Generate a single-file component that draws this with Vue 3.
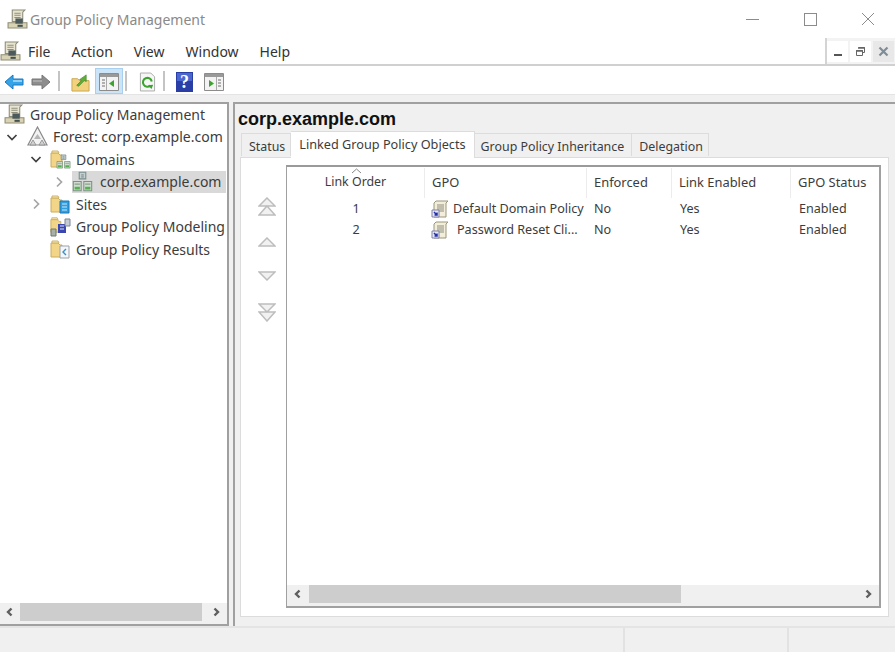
<script setup>
const menus = ['File', 'Action', 'View', 'Window', 'Help']
const tabs = ['Status', 'Linked Group Policy Objects', 'Group Policy Inheritance', 'Delegation']

const tree = [
  { label: 'Group Policy Management', icon: 'console', level: 0, arrow: '' },
  { label: 'Forest: corp.example.com', icon: 'forest', level: 1, arrow: 'open' },
  { label: 'Domains', icon: 'domains', level: 2, arrow: 'open' },
  { label: 'corp.example.com', icon: 'domain', level: 3, arrow: 'closed', selected: true },
  { label: 'Sites', icon: 'sites', level: 2, arrow: 'closed' },
  { label: 'Group Policy Modeling', icon: 'modeling', level: 2, arrow: '' },
  { label: 'Group Policy Results', icon: 'results', level: 2, arrow: '' }
]

const rows = [
  { order: 1, gpo: 'Default Domain Policy', indent: false },
  { order: 2, gpo: 'Password Reset Cli...', indent: true }
]
</script>

<template>
  <div class="window">
    <svg class="defs" width="0" height="0">
      <defs>
        <symbol id="console" viewBox="0 0 20 20">
          <path d="M5 1h12l-2 2v9H5z" fill="#e9e4cf" stroke="#8b8a78" stroke-width="1" />
          <path d="M7 4h6M7 6h6M7 8h6" stroke="#8f8f80" stroke-width="1" />
          <path d="M1 13h18v5H1z" fill="#d9d3b5" stroke="#8f8c70" stroke-width="1" />
          <path d="M8 9h7v5H8z" fill="#4d5a5c" />
          <path d="M10 15h5v2h-5z" fill="#44504f" />
        </symbol>
        <symbol id="folder" viewBox="0 0 20 20">
          <path d="M1 4h7l2 2h2v12H1z" fill="#f3d588" stroke="#c9ac5c" stroke-width="1" />
          <path d="M2 2h6l1 2H2z" fill="#f8e6ad" stroke="#cdb36c" stroke-width="1" />
        </symbol>
        <symbol id="servers" viewBox="0 0 16 16">
          <path d="M5.500 1h5v5h-5z" fill="#c5d0d0" stroke="#7a8c8c" stroke-width=".8" />
          <path d="M1 8h6v7H1z" fill="#cfdccf" stroke="#7a947f" stroke-width=".8" />
          <path d="M9 8h6v7H9z" fill="#cfdccf" stroke="#7a947f" stroke-width=".8" />
          <path d="M7 3h2M7 4.500h2" stroke="#6e8080" stroke-width=".7" />
          <path d="M2 10h4M10 10h4" stroke="#8aa08f" stroke-width=".8" />
          <path d="M2 13h4M10 13h4" stroke="#55b04f" stroke-width="2" />
        </symbol>
        <symbol id="gpo" viewBox="0 0 18 18">
          <path d="M5 1h12l-2 2v14H3V3z" fill="#f3eed9" stroke="#9a957c" stroke-width="1" />
          <path d="M6 5h7M6 7h7M6 9h7M6 11h7" stroke="#8d8d80" stroke-width="1" />
          <path d="M1 10h7v7H1z" fill="#e8e8f4" stroke="#7f80a8" stroke-width="1" />
          <path d="M3 12l3 3M6 12.500V15H3.500" fill="none" stroke="#2430a8" stroke-width="1.500" />
        </symbol>
        <symbol id="chev-left" viewBox="0 0 10 10">
          <path d="M6.500 1.500L3 5l3.500 3.500" fill="none" stroke="#5f5f5f" stroke-width="2.400" />
        </symbol>
        <symbol id="chev-right" viewBox="0 0 10 10">
          <path d="M3.500 1.500L7 5 3.500 8.500" fill="none" stroke="#5f5f5f" stroke-width="2.400" />
        </symbol>
      </defs>
    </svg>

    <header class="titlebar">
      <svg class="title-icon" width="21" height="21"><use href="#console" /></svg>
      <span class="title-text">Group Policy Management</span>
      <div class="caption">
        <span class="caption-btn"><i class="cap-min"></i></span>
        <span class="caption-btn"><i class="cap-max"></i></span>
        <span class="caption-btn">
          <svg width="14" height="14" viewBox="0 0 14 14"><path d="M1 1l12 12M13 1L1 13" stroke="#8c8c8c" stroke-width="1" /></svg>
        </span>
      </div>
    </header>

    <nav class="menubar">
      <svg class="menu-icon" width="21" height="21"><use href="#console" /></svg>
      <span v-for="m in menus" :key="m" class="menu-item">{{ m }}</span>
      <div class="mdi">
        <span class="mdi-btn"><i class="mdi-min"></i></span>
        <span class="mdi-btn">
          <svg width="11" height="11" viewBox="0 0 11 11"><path d="M3.500 1.500h6v5h-2M1.500 4.500h6v5h-6z" fill="none" stroke="#666" stroke-width="1" /><path d="M3 2h7M1 5h7" stroke="#666" stroke-width="1.500" /></svg>
        </span>
        <span class="mdi-btn mdi-close">
          <svg width="11" height="11" viewBox="0 0 11 11"><path d="M1.500 1.500l8 8M9.500 1.500l-8 8" stroke="#7f8c96" stroke-width="2.200" /></svg>
        </span>
      </div>
    </nav>

    <div class="toolbar">
      <button class="tool tool-back">
        <svg width="20" height="16" viewBox="0 0 20 16"><path d="M1 8l8-7v4h10v6H9v4z" fill="#35a3e6" stroke="#1b78c0" stroke-width="1" /><path d="M9 6h9v2H9z" fill="#8fd0f5" /></svg>
      </button>
      <button class="tool tool-forward">
        <svg width="20" height="16" viewBox="0 0 20 16"><path d="M19 8l-8-7v4H1v6h10v4z" fill="#8d8d8d" stroke="#777" stroke-width="1" /><path d="M2 6h9v2H2z" fill="#a8a8a8" /></svg>
      </button>
      <span class="tool-sep sep-a"></span>
      <button class="tool tool-up">
        <svg width="19" height="19" viewBox="0 0 20 20"><path d="M1 6h6l2 2h10v11H1z" fill="#f2d27c" stroke="#c8a654" stroke-width="1" /><path d="M6 13l5-5-2-1 7-5v7l-2-1-6 6z" fill="#5fae3a" stroke="#3f8a25" stroke-width=".7" /></svg>
      </button>
      <button class="tool tool-active">
        <svg width="20" height="18" viewBox="0 0 20 18"><path d="M.5 .5h19v17H.500z" fill="#f3f3f3" stroke="#8c8c8c" stroke-width="1" /><path d="M1 1h18v3H1z" fill="#999" /><path d="M7.500 4v13" stroke="#aaa" stroke-width="1" /><path d="M3 7h3M3 10h3M3 13h3" stroke="#9a9a9a" stroke-width="1.500" /><path d="M15 7v7l-5-3.500z" fill="#3ba32e" /></svg>
      </button>
      <span class="tool-sep sep-b"></span>
      <button class="tool tool-refresh">
        <svg width="17" height="20" viewBox="0 0 18 20"><path d="M1.500 .5h11l4 4v15h-15z" fill="#f6f6f6" stroke="#a9a9a9" stroke-width="1" /><path d="M13.500 9.500a4.700 4.700 0 1 0-1.300 4.200" fill="none" stroke="#3ba32e" stroke-width="2.200" /><path d="M15 13l-5.500 .5 3.800 3.800z" fill="#3ba32e" /></svg>
      </button>
      <span class="tool-sep sep-c"></span>
      <button class="tool tool-help">
        <svg width="17" height="20" viewBox="0 0 17 20"><path d="M0 0h17v20H0z" fill="#2a3fa6" /><path d="M1 1h15v8H1z" fill="#4a66cf" /><text x="8.500" y="16" text-anchor="middle" class="help-q">?</text></svg>
      </button>
      <button class="tool tool-panel">
        <svg width="20" height="18" viewBox="0 0 20 18"><path d="M.5 .5h19v17H.500z" fill="#f3f3f3" stroke="#8c8c8c" stroke-width="1" /><path d="M1 1h18v3H1z" fill="#999" /><path d="M12.500 4v13" stroke="#aaa" stroke-width="1" /><path d="M14 7h3M14 10h3M14 13h3" stroke="#9a9a9a" stroke-width="1.500" /><path d="M5 7v7l5-3.500z" fill="#3ba32e" /></svg>
      </button>
    </div>

    <main class="panes">
      <aside class="tree-pane">
        <ul class="tree">
          <li v-for="item in tree" :key="item.label" class="tree-row" :class="'lvl' + item.level">
            <span class="twisty">
              <svg v-if="item.arrow === 'open'" width="12" height="12" viewBox="0 0 12 12"><path d="M1.500 4L6 8.500 10.500 4" fill="none" stroke="#404040" stroke-width="1.700" /></svg>
              <svg v-else-if="item.arrow === 'closed'" width="12" height="12" viewBox="0 0 12 12"><path d="M4 1.500L8.500 6 4 10.500" fill="none" stroke="#a6a6a6" stroke-width="1.700" /></svg>
            </span>
            <span class="node" :class="{ selected: item.selected }">
              <svg class="node-icon" width="21" height="21" viewBox="0 0 21 21">
                <use v-if="item.icon === 'console'" href="#console" />
                <g v-else-if="item.icon === 'forest'">
                  <path d="M10.500 1L20 19H1z" fill="#f2f2f2" stroke="#8a8a8a" stroke-width="1.200" />
                  <path d="M10.500 8L14 13H7z" fill="#b5b5b5" />
                  <path d="M6 14l-3 5h6zM15 14l-3 5h6z" fill="#d0d0d0" stroke="#8a8a8a" stroke-width=".8" />
                </g>
                <g v-else-if="item.icon === 'domain'">
                  <use href="#servers" x="0" y="0" width="21" height="21" />
                </g>
                <g v-else-if="item.icon === 'domains'">
                  <use href="#folder" width="20" height="20" />
                  <use href="#servers" x="6" y="5" width="15" height="15" />
                </g>
                <g v-else-if="item.icon === 'sites'">
                  <use href="#folder" width="20" height="20" />
                  <path d="M10 7h9v12h-9z" fill="#2f9fe0" stroke="#1b77b8" stroke-width="1" />
                  <path d="M12 10h5M12 13h5M12 16h5" stroke="#c9e8fa" stroke-width="1.200" />
                </g>
                <g v-else-if="item.icon === 'modeling'">
                  <use href="#folder" width="18" height="18" />
                  <path d="M1 13h5v7H1z" fill="#a8b0a8" stroke="#6f7a70" stroke-width="1" />
                  <path d="M8 8h8v9H8z" fill="#3a47b0" />
                  <path d="M15 3h5v7h-5z" fill="#c5ccd4" stroke="#7a8590" stroke-width="1" />
                  <path d="M10 10h4M10 13h4" stroke="#dfe3f5" stroke-width="1.200" />
                </g>
                <g v-else>
                  <use href="#folder" width="20" height="20" />
                  <path d="M10 7h9v12h-9z" fill="#f5f6f8" stroke="#9aa3ad" stroke-width="1" />
                  <path d="M16 10l-3 3 3 3" fill="none" stroke="#3a8fc8" stroke-width="1.400" />
                </g>
              </svg>
              <span class="node-label">{{ item.label }}</span>
            </span>
          </li>
        </ul>
        <div class="hscroll tree-scroll">
          <span class="sb-btn"><svg width="10" height="10"><use href="#chev-left" /></svg></span>
          <span class="sb-track"><i class="sb-thumb full"></i></span>
          <span class="sb-btn"><svg width="10" height="10"><use href="#chev-right" /></svg></span>
        </div>
      </aside>

      <section class="detail-pane">
        <h1 class="heading">corp.example.com</h1>
        <div class="tabs">
          <span v-for="(t, i) in tabs" :key="t" class="tab" :class="{ active: i === 1 }">{{ t }}</span>
        </div>
        <div class="tab-body">
          <div class="order-btns">
            <svg width="18" height="20" viewBox="0 0 18 20"><path d="M9 1l8 8H1zM9 9l8 9H1z" fill="#f1f1f1" stroke="#bdbdbd" stroke-width="1.500" /></svg>
            <svg width="18" height="10" viewBox="0 0 18 10"><path d="M9 1l8 8H1z" fill="#f1f1f1" stroke="#bdbdbd" stroke-width="1.500" /></svg>
            <svg width="18" height="10" viewBox="0 0 18 10"><path d="M9 9l8-8H1z" fill="#f1f1f1" stroke="#bdbdbd" stroke-width="1.500" /></svg>
            <svg width="18" height="20" viewBox="0 0 18 20"><path d="M9 10L1 2h16zM9 19l-8-9h16z" fill="#f1f1f1" stroke="#bdbdbd" stroke-width="1.500" /></svg>
          </div>
          <div class="listview">
            <div class="list-main">
              <div class="list-head">
                <span class="col c-order">
                  <svg class="sort-caret" width="11" height="6" viewBox="0 0 11 6"><path d="M1 5l4.500-4L10 5" fill="none" stroke="#888" stroke-width="1" /></svg>
                  Link Order
                </span>
                <span class="col c-gpo">GPO</span>
                <span class="col c-enf">Enforced</span>
                <span class="col c-link">Link Enabled</span>
                <span class="col c-status">GPO Status</span>
              </div>
              <div v-for="r in rows" :key="r.order" class="list-row">
                <span class="cell c-order">{{ r.order }}</span>
                <span class="cell c-gpo">
                  <svg class="gpo-icon" width="18" height="18"><use href="#gpo" /></svg>
                  <span :class="{ 'gpo-indent': r.indent }">{{ r.gpo }}</span>
                </span>
                <span class="cell c-enf">No</span>
                <span class="cell c-link">Yes</span>
                <span class="cell c-status">Enabled</span>
              </div>
            </div>
            <div class="hscroll list-scroll">
              <span class="sb-btn"><svg width="10" height="10"><use href="#chev-left" /></svg></span>
              <span class="sb-track"><i class="sb-thumb part"></i></span>
              <span class="sb-btn"><svg width="10" height="10"><use href="#chev-right" /></svg></span>
            </div>
          </div>
        </div>
      </section>
    </main>

    <footer class="statusbar">
      <span class="st st-main"></span>
      <span class="st st-mid"></span>
      <span class="st st-end"></span>
    </footer>
  </div>
</template>

<style>
html, body {
  margin: 0;
  background: #f0f0f0;
}
</style>

<style scoped>
.window {
  width: 895px;
  height: 652px;
  display: flex;
  flex-direction: column;
  overflow: hidden;
  background: #f0f0f0;
  color: #3c3c3c;
  font-family: "Noto Sans", "Open Sans", sans-serif;
  font-size: 14px;
}
.defs {
  position: absolute;
}

.titlebar {
  height: 38px;
  flex: none;
  display: flex;
  align-items: center;
  background: #fff;
}
.title-icon {
  margin-left: 7px;
  margin-right: 2px;
}
.title-text {
  color: #8a8a8a;
  font-size: 14px;
}
.caption {
  margin-left: auto;
  margin-right: -2px;
  display: flex;
}
.caption-btn {
  width: 58px;
  height: 38px;
  display: flex;
  align-items: center;
  justify-content: center;
}
.cap-min {
  width: 13px;
  height: 1px;
  background: #8c8c8c;
}
.cap-max {
  width: 11px;
  height: 11px;
  border: 1px solid #8c8c8c;
}

.menubar {
  height: 28px;
  flex: none;
  display: flex;
  align-items: center;
  background: #fff;
  border-bottom: 2px solid #d0d0d0;
  box-sizing: border-box;
}
.menu-icon {
  flex: none;
  margin-right: 7px;
}
.menu-item {
  margin-right: 21px;
  color: #333;
  font-size: 14px;
}
.mdi {
  margin-left: auto;
  align-self: stretch;
  width: 70px;
  display: flex;
  align-items: center;
  gap: 2px;
  box-sizing: border-box;
  border-left: 2px solid #d4d4d4;
  background: #f3f3f3;
}
.mdi-btn {
  width: 21px;
  height: 21px;
  display: flex;
  align-items: center;
  justify-content: center;
  background: #fff;
}
.mdi-close {
  background: #e8e8e8;
}
.mdi-min {
  width: 8px;
  height: 2px;
  margin-top: 8px;
  background: #555;
}

.toolbar {
  height: 29px;
  flex: none;
  display: flex;
  align-items: center;
  padding-top: 2px;
  background: #fff;
  border-bottom: 1px solid #e4e4e4;
  box-sizing: border-box;
}
.tool {
  height: 26px;
  padding: 2px 0 0;
  border: 1px solid transparent;
  background: transparent;
  display: flex;
  align-items: center;
  justify-content: center;
  flex: none;
}
.tool-back {
  width: 27px;
}
.tool-forward {
  width: 28px;
}
.tool-sep {
  width: 2px;
  height: 20px;
  flex: none;
  background: #c4c4c4;
}
.sep-a {
  margin: 0 8px 0 3px;
}
.sep-b {
  margin: 0 9px 0 2px;
}
.sep-c {
  margin: 0 10px 0 5px;
}
.tool-up {
  width: 24px;
}
.tool-active {
  width: 28px;
  margin-left: 3px;
  background: #cce4f7;
  border-color: #a8d0ee;
}
.tool-refresh {
  width: 22px;
}
.tool-help {
  width: 19px;
}
.tool-panel {
  width: 23px;
  margin-left: 8px;
}
.help-q {
  fill: #fff;
  font-family: "Liberation Serif", serif;
  font-size: 18px;
  font-weight: 700;
}

.panes {
  flex: 1;
  min-height: 0;
  display: flex;
  gap: 4px;
  padding-top: 7px;
}
.tree-pane {
  width: 229px;
  box-sizing: border-box;
  display: flex;
  flex-direction: column;
  background: #fff;
  border-top: 2px solid #a0a0a0;
  border-right: 2px solid #a0a0a0;
  border-bottom: 2px solid #a0a0a0;
  overflow: hidden;
}
.tree {
  flex: 1;
  margin: -1px 0 0;
  padding: 0;
  list-style: none;
  overflow: hidden;
}
.tree-row {
  height: 22.5px;
  display: flex;
  align-items: center;
  white-space: nowrap;
}
.twisty {
  width: 12px;
  height: 12px;
  flex: none;
  margin-right: 3px;
  display: flex;
}
.lvl0 .twisty {
  visibility: hidden;
  width: 0;
  margin: 0 0 0 4px;
}
.lvl1 .twisty {
  margin-left: 6px;
  margin-right: 9px;
}
.lvl2 .twisty {
  margin-left: 30px;
  margin-right: 8px;
}
.lvl3 .twisty {
  margin-left: 53px;
  margin-right: 7px;
}
.node {
  flex: 1;
  height: 22px;
  display: flex;
  align-items: center;
  font-size: 14px;
  color: #3c3c3c;
}
.node.selected {
  background: #d9d9d9;
  margin-right: 1px;
}
.node-icon {
  flex: none;
  margin-right: 5px;
}
.selected .node-icon {
  margin-right: 7px;
}

.hscroll {
  height: 21px;
  flex: none;
  display: flex;
  align-items: stretch;
  padding-bottom: 3px;
  box-sizing: border-box;
  background: #f0f0f0;
}
.sb-btn {
  width: 20px;
  flex: none;
  display: flex;
  align-items: center;
  justify-content: center;
}
.tree-scroll .sb-btn:last-child {
  width: 25px;
  padding-left: 3px;
  box-sizing: border-box;
}
.list-scroll .sb-btn {
  width: 22px;
}
.sb-track {
  flex: 1;
  display: block;
}
.sb-thumb {
  display: block;
  height: 100%;
  background: #cdcdcd;
}
.sb-thumb.full {
  width: 100%;
}
.sb-thumb.part {
  width: 372px;
}

.detail-pane {
  flex: 1;
  min-width: 0;
  display: flex;
  flex-direction: column;
  padding: 0 6px 0 5px;
  border-top: 2px solid #a0a0a0;
  border-left: 2px solid #a0a0a0;
  box-sizing: border-box;
}
.heading {
  margin: 4px 0 0 -2px;
  font-family: "Liberation Sans", Arial, sans-serif;
  font-size: 18px;
  line-height: 22px;
  font-weight: 700;
  color: #111;
}
.tabs {
  display: flex;
  align-items: flex-end;
  height: 27px;
  margin-left: 1px;
  position: relative;
  z-index: 1;
}
.tab {
  height: 23px;
  box-sizing: border-box;
  padding: 3px 7px 0 6px;
  display: flex;
  align-items: center;
  margin-bottom: 1px;
  background: #f0f0f0;
  border: 1px solid #dcdcdc;
  border-bottom: none;
  border-left: none;
  font-size: 12.4px;
  color: #3c3c3c;
}
.tab:first-child {
  border-left: 1px solid #dcdcdc;
  padding-left: 7px;
  padding-right: 5px;
}
.tab:last-child {
  padding-left: 7px;
  padding-right: 5px;
}
.tab.active {
  height: 27px;
  margin-bottom: -1px;
  padding: 0 8px 3px;
  background: #fff;
  font-size: 12.7px;
}
.tab-body {
  height: 460px;
  flex: none;
  display: flex;
  background: #fff;
  border: 1px solid #dcdcdc;
  box-sizing: border-box;
  padding: 7px 7px 8px 0;
}
.order-btns {
  width: 45px;
  flex: none;
  padding: 32px 0 0 6px;
  box-sizing: border-box;
  display: flex;
  flex-direction: column;
  align-items: center;
}
.order-btns svg:nth-child(2) {
  margin-top: 20px;
}
.order-btns svg:nth-child(3) {
  margin-top: 24px;
}
.order-btns svg:nth-child(4) {
  margin-top: 21px;
}
.listview {
  flex: 1;
  min-width: 0;
  display: flex;
  flex-direction: column;
  border: 2px solid #a0a0a0;
  border-left-width: 1px;
  border-top-color: #9a9a9a;
}
.list-main {
  flex: 1;
  min-height: 0;
  overflow: hidden;
  padding-top: 1px;
}
.list-head {
  height: 30px;
  display: flex;
  align-items: center;
}
.list-row {
  height: 21px;
  display: flex;
  align-items: center;
}
.col,
.cell {
  box-sizing: border-box;
  flex: none;
  color: #3c3c3c;
  white-space: nowrap;
}
.col {
  height: 100%;
  display: flex;
  align-items: center;
  border-right: 1px solid #ececec;
  padding: 0 0 3px 7px;
  position: relative;
  font-size: 12.9px;
}
.col.c-status {
  border-right: none;
}
.c-order {
  width: 138px;
  justify-content: center;
  text-align: center;
}
.col.c-order {
  padding-left: 0;
  font-size: 12.4px;
}
.c-gpo {
  width: 162px;
}
.c-enf {
  width: 85px;
}
.c-link {
  width: 119px;
}
.c-status {
  width: 88px;
}
.cell {
  padding-left: 8px;
  font-size: 12.6px;
}
.cell.c-order {
  padding-left: 0;
}
.cell.c-enf {
  padding-left: 7px;
}
.cell.c-gpo {
  display: flex;
  align-items: center;
  gap: 4px;
  padding-left: 6px;
  overflow: hidden;
}
.gpo-icon {
  flex: none;
}
.gpo-indent {
  margin-left: 4px;
}
.sort-caret {
  position: absolute;
  top: 0;
  left: 64px;
}

.statusbar {
  height: 26px;
  flex: none;
  display: flex;
  border-top: 2px solid #e4e4e4;
  box-sizing: border-box;
}
.st {
  display: block;
  box-sizing: border-box;
  border-right: 2px solid #e2e2e2;
}
.st-main {
  width: 625px;
}
.st-mid {
  width: 164px;
}
.st-end {
  flex: 1;
  border-right: none;
}
</style>
